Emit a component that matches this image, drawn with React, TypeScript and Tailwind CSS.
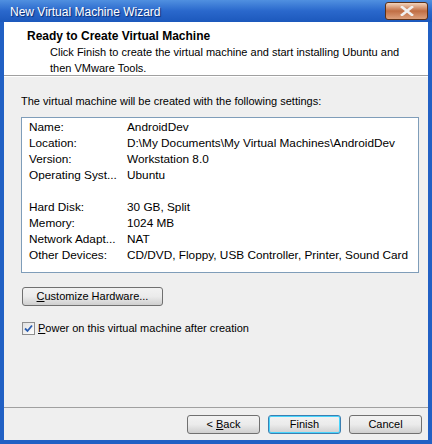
import React from "react";

const font = { fontFamily: '"Liberation Sans", Arial, sans-serif' };

function Btn({ children, def = false, w = "w-[73px]" }: { children: React.ReactNode; def?: boolean; w?: string }) {
  return (
    <div
      className={`${w} h-[19px] rounded-[3px] border ${def ? "border-[#3c7fb1] shadow-[inset_0_0_0_1px_#48d5fd]" : "border-[#707070]"} bg-gradient-to-b from-[#f2f2f2] via-[#ebebeb] to-[#cfcfcf] flex items-center justify-center text-[11px] text-black`}
    >
      {children}
    </div>
  );
}

const rows1: [string, string][] = [
  ["Name:", "AndroidDev"],
  ["Location:", "D:\\My Documents\\My Virtual Machines\\AndroidDev"],
  ["Version:", "Workstation 8.0"],
  ["Operating Syst...", "Ubuntu"],
];
const rows2: [string, string][] = [
  ["Hard Disk:", "30 GB, Split"],
  ["Memory:", "1024 MB"],
  ["Network Adapt...", "NAT"],
  ["Other Devices:", "CD/DVD, Floppy, USB Controller, Printer, Sound Card"],
];

function Rows({ rows }: { rows: [string, string][] }) {
  return (
    <div className="flex flex-col text-[11.8px]">
      {rows.map(([k, v]) => (
        <div key={k} className="flex h-[16px] items-center">
          <div className="w-[98px] shrink-0 whitespace-nowrap">{k}</div>
          <div className="whitespace-nowrap">{v}</div>
        </div>
      ))}
    </div>
  );
}

export default function App() {
  return (
    <div style={font} className="w-[432px] h-[444px] bg-[#2160c4] flex flex-col overflow-hidden text-[11px] text-black">
      {/* title bar */}
      <div className="h-[22px] shrink-0 flex items-center justify-between pl-[10px] pr-[4px] bg-gradient-to-b from-[#5090e0] via-[#2a68cc] to-[#1c58bc]">
        <div className="text-white text-[12px] pt-[2px] [text-shadow:1px_1px_1px_#0a2a70]">New Virtual Machine Wizard</div>
        <div className="w-[43px] h-[18px] rounded-[3px] border border-[#5a3018] bg-gradient-to-b from-[#f2d4bc] via-[#c06e44] to-[#dca07c] flex items-center justify-center">
          <svg width="14" height="10" viewBox="0 0 14 10">
            <path d="M2 1 L12 9 M12 1 L2 9" stroke="#f0f0f0" strokeWidth="2.6" strokeLinecap="square" />
          </svg>
        </div>
      </div>
      {/* client */}
      <div className="flex-1 mx-[4px] mb-[4px] bg-[#efefef] flex flex-col">
        <div className="h-[54px] shrink-0 bg-white border-b border-[#a0a0a0] pl-[23px] pt-[6px]">
          <div className="font-bold text-[12px] leading-[16px]">Ready to Create Virtual Machine</div>
          <div className="pl-[23px] leading-[16px]">
            Click Finish to create the virtual machine and start installing Ubuntu and
            <br />
            then VMware Tools.
          </div>
        </div>
        <div className="flex-1 flex flex-col pl-[17px] pr-[9px] pt-[16px] border-t border-white">
          <div className="leading-[16px]">The virtual machine will be created with the following settings:</div>
          <div className="mt-[8px] h-[156px] bg-white border border-[#7f9db9] pl-[7px] pt-[2px] flex flex-col gap-[16px]">
            <Rows rows={rows1} />
            <Rows rows={rows2} />
          </div>
          <div className="mt-[14px] ml-[1px]">
            <Btn w="w-[141px]">
              <span>
                <u>C</u>ustomize Hardware...
              </span>
            </Btn>
          </div>
          <div className="mt-[14px] flex items-center gap-[3px] ml-[1px]">
            <div className="w-[13px] h-[13px] border border-[#8f8f8f] bg-gradient-to-br from-[#e0e0e0] to-[#ffffff] flex items-center justify-center">
              <svg width="9" height="9" viewBox="0 0 9 9">
                <path d="M1 4.5 L3.5 7 L8 1.5" stroke="#2a5db0" strokeWidth="1.8" fill="none" />
              </svg>
            </div>
            <span>
              <u>P</u>ower on this virtual machine after creation
            </span>
          </div>
        </div>
        <div className="h-[33px] shrink-0 border-t border-[#a0a0a0] flex items-center justify-end gap-[8px] pr-[6px]">
          <Btn>
            <span>
              &lt; <u>B</u>ack
            </span>
          </Btn>
          <Btn def>Finish</Btn>
          <Btn>Cancel</Btn>
        </div>
      </div>
    </div>
  );
}
